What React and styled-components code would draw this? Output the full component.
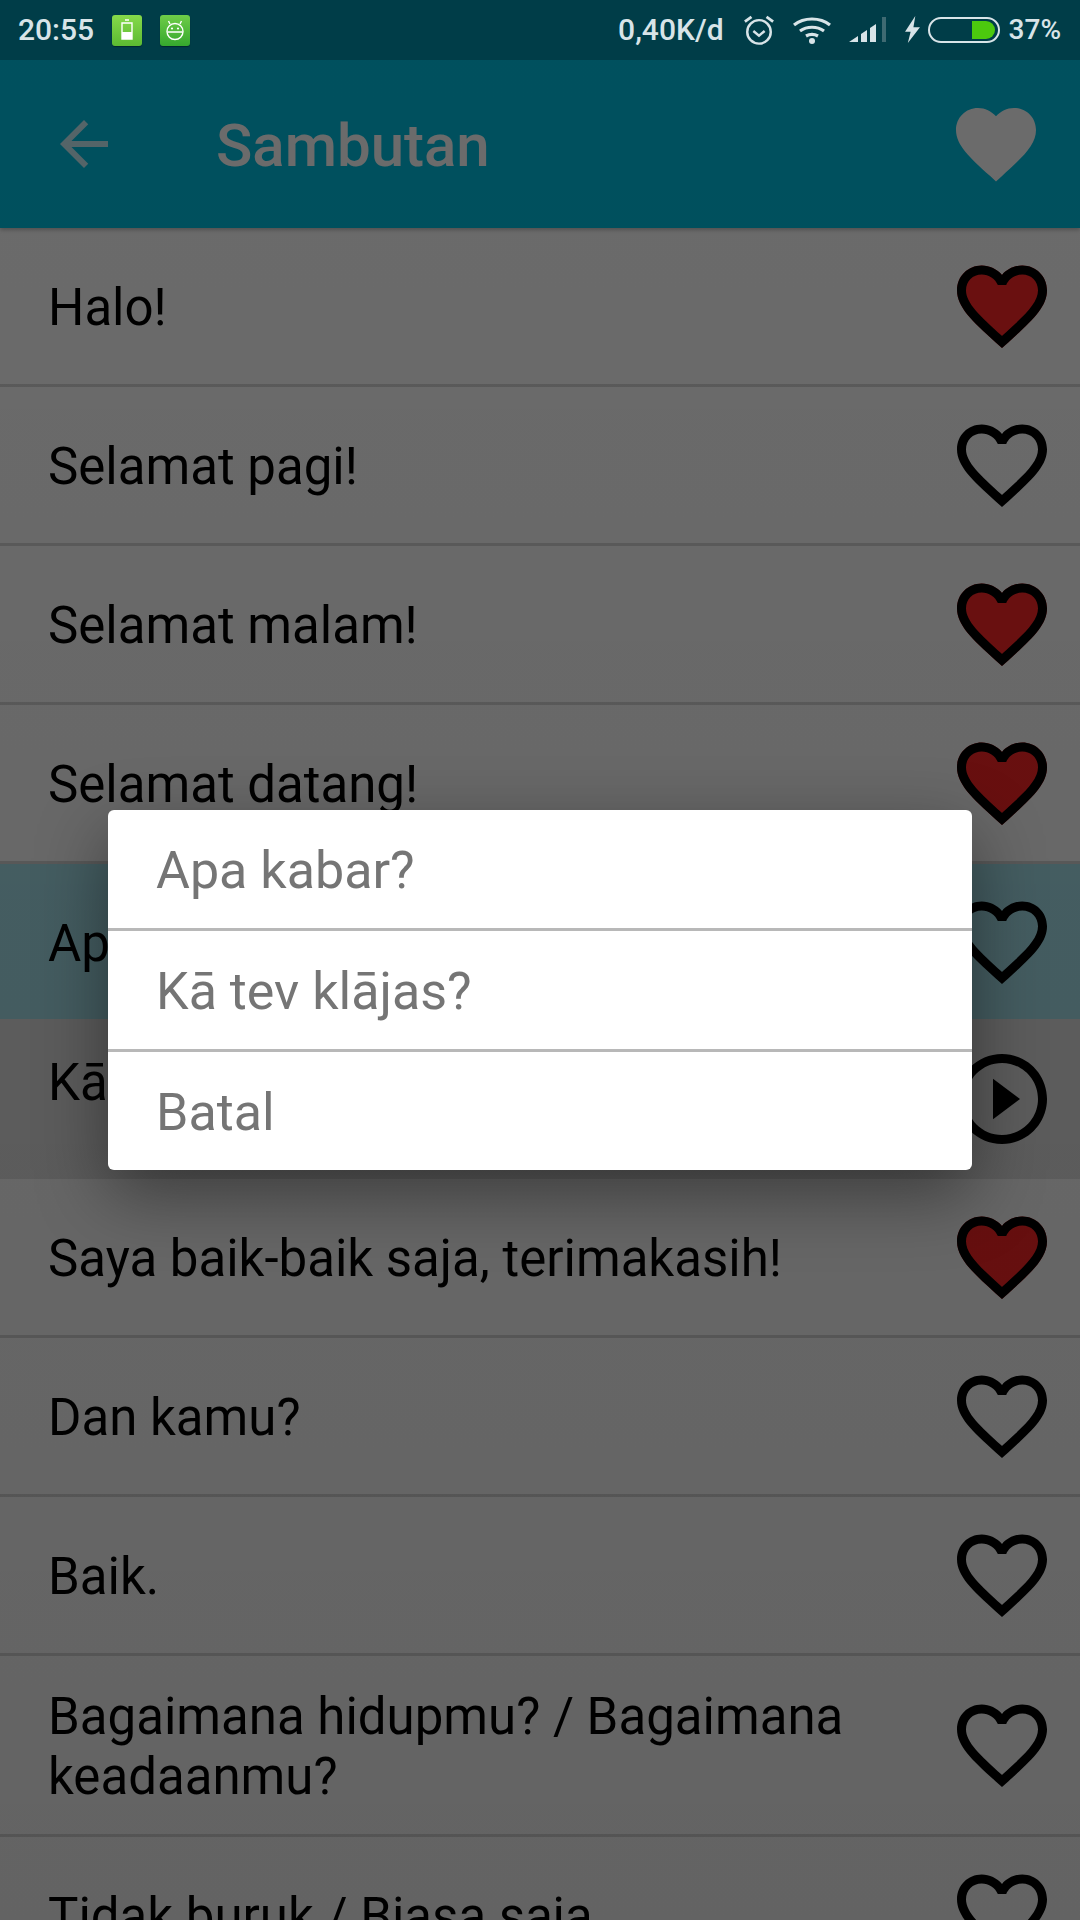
import React from "react";
import styled, { createGlobalStyle } from "styled-components";

const Global = createGlobalStyle`
  html, body { margin: 0; padding: 0; background: #fff; }
  body { font-family: Roboto, "Noto Sans", sans-serif; }
  * { box-sizing: border-box; }
`;

const Screen = styled.div`
  position: relative;
  width: 1080px;
  height: 1920px;
  overflow: hidden;
  background: #fff;
`;

const StatusBar = styled.div`
  position: relative;
  z-index: 2;
  height: 60px;
  background: #003d48;
  display: flex;
  align-items: center;
  justify-content: space-between;
  padding: 0 19px 0 18px;
  color: #d8e4e8;
  font-size: 30px;
  font-weight: 500;
`;

const StatusGroup = styled.div`
  display: flex;
  align-items: center;
`;

const StatusText = styled.span`
  line-height: 60px;
  margin-left: ${(p) => p.$left || 0}px;
  font-size: ${(p) => p.$size || 30}px;
`;

const Badge = styled.div`
  width: 30px;
  height: 31px;
  margin-left: ${(p) => p.$left}px;
  border-radius: 3px;
  background: linear-gradient(180deg, ${(p) => p.$from}, ${(p) => p.$to});
  box-shadow: 0 1px 1px rgba(0, 0, 0, 0.35);
  display: flex;
  align-items: center;
  justify-content: center;
`;

const StatusIcon = styled.svg`
  display: block;
  flex: none;
  margin-left: ${(p) => p.$left || 0}px;
`;

const Toolbar = styled.header`
  height: 168px;
  background: #00bfe0;
  display: flex;
  align-items: center;
  padding: 0 36px 0 48px;
  box-shadow: 0 2px 4px rgba(0, 0, 0, 0.25);
  position: relative;
  z-index: 1;
`;

const Title = styled.h1`
  margin: 3px 0 0 96px;
  flex: 1;
  font-size: 60px;
  font-weight: 500;
  color: #fff;
`;

const List = styled.div`
  display: flex;
  flex-direction: column;
`;

const Row = styled.div`
  height: ${(p) => p.$h}px;
  flex: none;
  display: flex;
  align-items: center;
  padding: 0 24px 0 48px;
  background: ${(p) => p.$bg || "#fff"};
  border-bottom: ${(p) => (p.$line ? "3px solid #d8d8d8" : "none")};
`;

const RowText = styled.div`
  flex: 1;
  font-size: 51px;
  line-height: 60px;
  color: #000;
  margin-top: 4px;
  margin-bottom: ${(p) => p.$raise || 0}px;
`;

const Scrim = styled.div`
  position: absolute;
  left: 0;
  right: 0;
  top: 60px;
  bottom: 0;
  z-index: 1;
  background: linear-gradient(180deg, rgba(0, 0, 0, 0.58), rgba(0, 0, 0, 0.61));
  display: flex;
  align-items: center;
  justify-content: center;
`;

const Dialog = styled.div`
  width: 864px;
  height: 360px;
  background: #fff;
  border-radius: 6px;
  display: flex;
  flex-direction: column;
  box-shadow: 0 24px 70px rgba(0, 0, 0, 0.42);
`;

const DialogItem = styled.div`
  flex: 1;
  display: flex;
  align-items: center;
  padding: 3px 0 0 48px;
  font-size: 52px;
  color: #757575;
  border-bottom: ${(p) => (p.$line ? "3px solid #b8b8b8" : "none")};
`;

const HEART_OUTLINE =
  "M16.5 3c-1.74 0-3.41.81-4.5 2.09C10.91 3.81 9.24 3 7.5 3 4.42 3 2 5.42 2 8.5c0 3.78 3.4 6.86 8.55 11.54L12 21.35l1.45-1.32C18.6 15.36 22 12.28 22 8.5 22 5.42 19.58 3 16.5 3zm-4.4 15.55l-.1.1-.1-.1C7.14 14.24 4 11.39 4 8.5 4 6.5 5.5 5 7.5 5c1.54 0 3.04.99 3.57 2.36h1.87C13.46 5.99 14.96 5 16.5 5c2 0 3.5 1.5 3.5 3.5 0 2.89-3.14 5.74-7.9 10.05z";
const HEART_FILL =
  "M12 21.35l-1.45-1.32C5.4 15.36 2 12.28 2 8.5 2 5.42 4.42 3 7.5 3c1.74 0 3.41.81 4.5 2.09C13.09 3.81 14.76 3 16.5 3 19.58 3 22 5.42 22 8.5c0 3.78-3.4 6.86-8.55 11.54L12 21.35z";

const Heart = ({ filled }) => (
  <svg width="108" height="108" viewBox="0 0 24 24" style={{ flex: "none" }}>
    {filled && <path d={HEART_FILL} fill="#ff2626" />}
    <path d={HEART_OUTLINE} fill="#000" />
  </svg>
);

const Play = () => (
  <svg width="108" height="108" viewBox="0 0 24 24" style={{ flex: "none" }}>
    <path
      d="M10 16.5l6-4.5-6-4.5v9zM12 2C6.48 2 2 6.48 2 12s4.48 10 10 10 10-4.48 10-10S17.52 2 12 2zm0 18c-4.41 0-8-3.59-8-8s3.59-8 8-8 8 3.59 8 8-3.59 8-8 8z"
      fill="#000"
    />
  </svg>
);

const rows = [
  { t: "Halo!", h: 159, line: true, filled: true },
  { t: "Selamat pagi!", h: 159, line: true },
  { t: "Selamat malam!", h: 159, line: true, filled: true },
  { t: "Selamat datang!", h: 159, line: true, filled: true },
  { t: "Apa kabar?", h: 155, bg: "#a8e4ee" },
  { t: "Kā tev klājas?", h: 160, bg: "#e4e4e4", play: true, raise: 36 },
  { t: "Saya baik-baik saja, terimakasih!", h: 159, line: true, filled: true },
  { t: "Dan kamu?", h: 159, line: true },
  { t: "Baik.", h: 159, line: true },
  { t: "Bagaimana hidupmu? / Bagaimana keadaanmu?", h: 181, line: true },
  { t: "Tidak buruk / Biasa saja", h: 159, line: true },
];

export default function App() {
  return (
    <Screen>
      <Global />
      <StatusBar>
        <StatusGroup>
          <StatusText>20:55</StatusText>
          <Badge $left={18} $from="#86d94a" $to="#5cba32">
            <svg width="14" height="22" viewBox="0 0 14 22">
              <path d="M5 1h4M2 4h10v16H2z" fill="none" stroke="#fff" strokeWidth="1.4" />
              <rect x="2" y="13" width="10" height="7" fill="#fff" />
            </svg>
          </Badge>
          <Badge $left={18} $from="#6fcc48" $to="#35a82e">
            <svg width="20" height="24" viewBox="0 0 20 24">
              <circle cx="10" cy="13.5" r="8" fill="none" stroke="#fff" strokeWidth="1.4" />
              <path d="M2.500 14h15M5 6l-1.500-3M15 6l1.500-3" stroke="#fff" strokeWidth="1.4" fill="none" />
              <circle cx="7" cy="10.5" r="1.1" fill="#fff" />
              <circle cx="13" cy="10.5" r="1.1" fill="#fff" />
            </svg>
          </Badge>
        </StatusGroup>
        <StatusGroup>
          <StatusText>0,40K/d</StatusText>
          <StatusIcon width="32" height="34" viewBox="0 0 34 34" $left={19} fill="none" stroke="#d8e4e8">
            <circle cx="17" cy="19" r="12.5" strokeWidth="2.6" />
            <path d="M11 18l6 5 6-5" strokeWidth="2.6" />
            <path d="M2 8l7-5M32 8l-7-5" strokeWidth="3" />
          </StatusIcon>
          <StatusIcon width="38" height="28" viewBox="1 0 38 28" $left={18} fill="none" stroke="#d8e4e8">
            <path d="M2 9c10-8 26-8 36 0M8 15c7-5 17-5 24 0M14 20c3.500-2 8.500-2 12 0" strokeWidth="3.200" />
            <circle cx="20" cy="25" r="3" fill="#d8e4e8" stroke="none" />
          </StatusIcon>
          <StatusIcon width="37" height="26" viewBox="0 0 37 26" $left={18}>
            <path d="M0 25l9-6v6zM12 17l6-4v12h-6zM21 11l6-4v18h-6z" fill="#d8e4e8" />
            <path d="M33 0h4v25h-4z" fill="#3f6a72" />
          </StatusIcon>
          <StatusIcon width="17" height="28" viewBox="0 0 18 30" $left={18}>
            <path d="M12 0L1 17h6l-3 12 13-17h-7z" fill="#d8e4e8" />
          </StatusIcon>
          <StatusIcon width="72" height="26" viewBox="0 0 72 26" $left={7}>
            <rect x="1" y="1" width="70" height="24" rx="12" fill="none" stroke="#d8e4e8" strokeWidth="2" />
            <path d="M44 4h14a9 9 0 0 1 0 18H44z" fill="#4cc90e" />
          </StatusIcon>
          <StatusText $left={9} $size={28}>37%</StatusText>
        </StatusGroup>
      </StatusBar>

      <Toolbar>
        <svg width="72" height="72" viewBox="0 0 24 24" style={{ flex: "none" }}>
          <path d="M20 11H7.830l5.590-5.590L12 4l-8 8 8 8 1.410-1.410L7.830 13H20v-2z" fill="#c8f0f8" />
        </svg>
        <Title>Sambutan</Title>
        <svg width="96" height="96" viewBox="0 0 24 24" style={{ flex: "none" }}>
          <path d={HEART_FILL} fill="#fff" />
        </svg>
      </Toolbar>

      <List>
        {rows.map((r) => (
          <Row key={r.t} $h={r.h} $bg={r.bg} $line={r.line}>
            <RowText $raise={r.raise}>{r.t}</RowText>
            {r.play ? <Play /> : <Heart filled={r.filled} />}
          </Row>
        ))}
      </List>

      <Scrim>
        <Dialog>
          <DialogItem $line>Apa kabar?</DialogItem>
          <DialogItem $line>Kā tev klājas?</DialogItem>
          <DialogItem>Batal</DialogItem>
        </Dialog>
      </Scrim>
    </Screen>
  );
}
